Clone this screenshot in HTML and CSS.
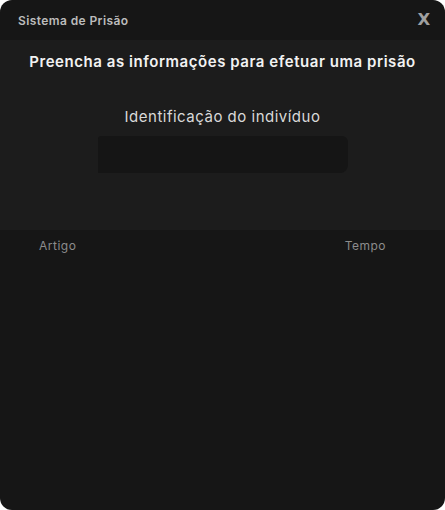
FILE: index.html
```html
<!DOCTYPE html>
<html lang="pt">
<head>
<meta charset="utf-8">
<link rel="stylesheet" href="styles.css">
</head>
<body>
<div class="modal">
  <header class="modal-header">
    <span class="modal-title">Sistema de Prisão</span>
    <span class="modal-close">X</span>
  </header>
  <section class="form-section">
    <h1 class="form-heading">Preencha as informações para efetuar uma prisão</h1>
    <label class="field-label">Identificação do indivíduo</label>
    <div class="field-input"></div>
  </section>
  <div class="table-head">
    <span class="col-artigo">Artigo</span>
    <span class="col-tempo">Tempo</span>
  </div>
</div>
</body>
</html>
```

FILE: styles.css
```css
* { box-sizing: border-box; margin: 0; padding: 0; }
html, body { width: 445px; height: 510px; background: #ffffff; }
body { font-family: "Inter", "Open Sans", sans-serif; }
.modal {
  width: 445px;
  height: 510px;
  background: #161616;
  border-radius: 12px;
  overflow: hidden;
  display: flex;
  flex-direction: column;
}
.modal-header {
  height: 40px;
  display: flex;
  align-items: center;
  justify-content: space-between;
  padding: 0 15px 0 18px;
}
.modal-title {
  font-size: 12px;
  font-weight: 600;
  color: #bcbcbc;
  letter-spacing: 0.4px;
}
.modal-close {
  font-family: "DejaVu Sans", sans-serif;
  font-size: 15px;
  font-weight: 700;
  color: #a0a0a0;
  transform: scaleX(1.1);
}
.form-section {
  height: 190px;
  background: #1c1c1c;
  display: flex;
  flex-direction: column;
  align-items: center;
  padding-top: 12px;
}
.form-heading {
  font-size: 15px;
  font-weight: 600;
  color: #f2f2f2;
  line-height: 20px;
  letter-spacing: 0.55px;
}
.field-label {
  margin-top: 35px;
  font-size: 15px;
  font-weight: 400;
  color: #d9d9d9;
  line-height: 20px;
  letter-spacing: 0.5px;
}
.field-input {
  margin-top: 9px;
  width: 250px;
  height: 37px;
  background: #151515;
  border-radius: 3px 6px 8px 0;
  margin-left: 1px;
}
.table-head {
  display: flex;
  justify-content: space-between;
  padding: 8px 59px 0 39px;
  font-size: 12px;
  color: #8c8c8c;
  line-height: 16px;
  letter-spacing: 0.5px;
}
```
